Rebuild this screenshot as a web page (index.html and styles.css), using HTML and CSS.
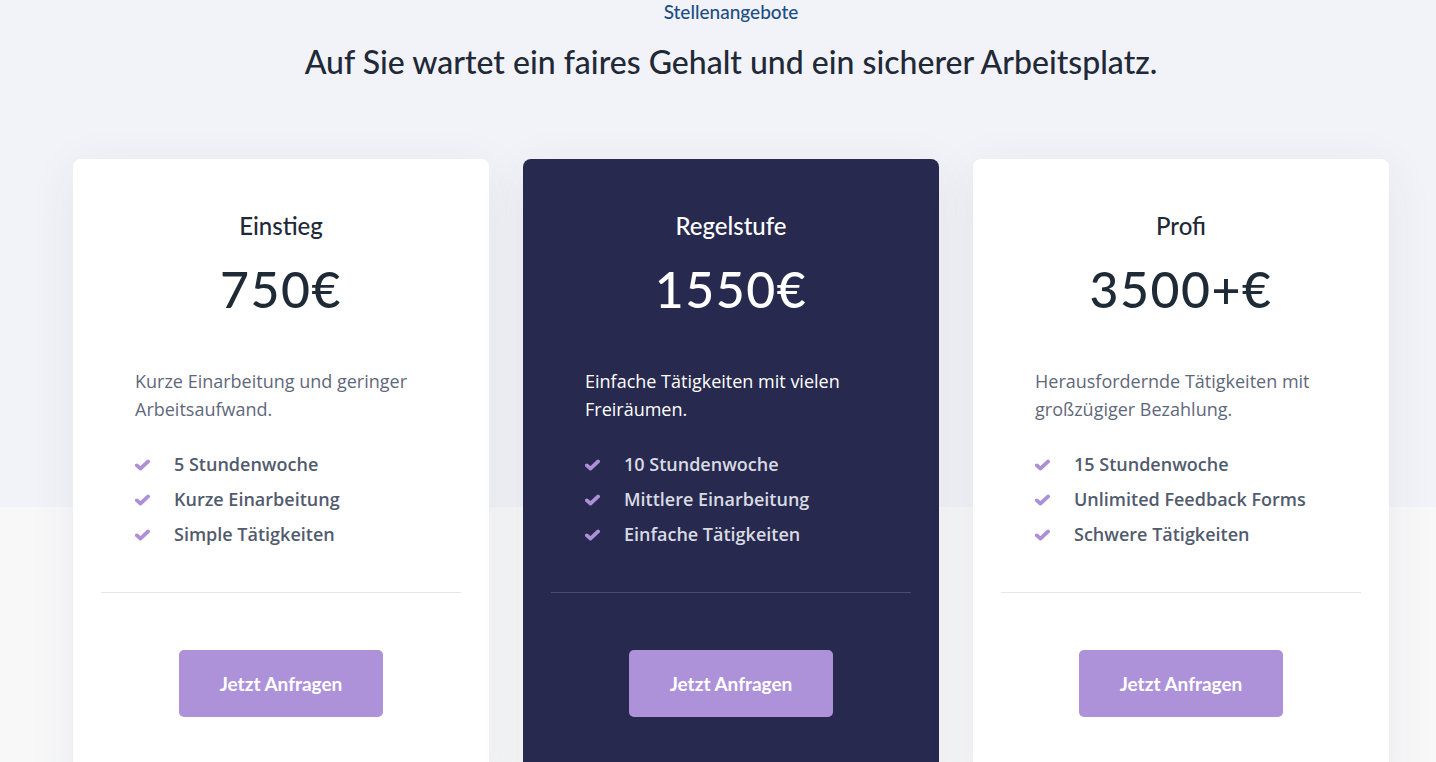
FILE: index.html
```html
<!DOCTYPE html>
<html lang="de">
<head>
<meta charset="utf-8">
<title>Stellenangebote</title>
<link rel="stylesheet" href="styles.css">
</head>
<body>
<section class="pricing">
  <p class="eyebrow">Stellenangebote</p>
  <h1 class="headline">Auf Sie wartet ein faires Gehalt und ein sicherer Arbeitsplatz.</h1>
  <div class="cards">
    <article class="card">
      <h2 class="card-title">Einstieg</h2>
      <div class="price">750€</div>
      <p class="desc">Kurze Einarbeitung und geringer Arbeitsaufwand.</p>
      <ul class="features">
        <li><svg class="check" viewBox="0 0 16 12"><path d="M2 6.4 L5.8 9.8 L14 2.2" /></svg>5 Stundenwoche</li>
        <li><svg class="check" viewBox="0 0 16 12"><path d="M2 6.4 L5.8 9.8 L14 2.2" /></svg>Kurze Einarbeitung</li>
        <li><svg class="check" viewBox="0 0 16 12"><path d="M2 6.4 L5.8 9.8 L14 2.2" /></svg>Simple Tätigkeiten</li>
      </ul>
      <hr class="divider">
      <a class="btn" href="#">Jetzt Anfragen</a>
    </article>
    <article class="card card-dark">
      <h2 class="card-title">Regelstufe</h2>
      <div class="price">1550€</div>
      <p class="desc">Einfache Tätigkeiten mit vielen Freiräumen.</p>
      <ul class="features">
        <li><svg class="check" viewBox="0 0 16 12"><path d="M2 6.4 L5.8 9.8 L14 2.2" /></svg>10 Stundenwoche</li>
        <li><svg class="check" viewBox="0 0 16 12"><path d="M2 6.4 L5.8 9.8 L14 2.2" /></svg>Mittlere Einarbeitung</li>
        <li><svg class="check" viewBox="0 0 16 12"><path d="M2 6.4 L5.8 9.8 L14 2.2" /></svg>Einfache Tätigkeiten</li>
      </ul>
      <hr class="divider">
      <a class="btn" href="#">Jetzt Anfragen</a>
    </article>
    <article class="card">
      <h2 class="card-title">Profi</h2>
      <div class="price">3500+€</div>
      <p class="desc">Herausfordernde Tätigkeiten mit großzügiger Bezahlung.</p>
      <ul class="features">
        <li><svg class="check" viewBox="0 0 16 12"><path d="M2 6.4 L5.8 9.8 L14 2.2" /></svg>15 Stundenwoche</li>
        <li><svg class="check" viewBox="0 0 16 12"><path d="M2 6.4 L5.8 9.8 L14 2.2" /></svg>Unlimited Feedback Forms</li>
        <li><svg class="check" viewBox="0 0 16 12"><path d="M2 6.4 L5.8 9.8 L14 2.2" /></svg>Schwere Tätigkeiten</li>
      </ul>
      <hr class="divider">
      <a class="btn" href="#">Jetzt Anfragen</a>
    </article>
  </div>
</section>
</body>
</html>
```

FILE: styles.css
```css
* { box-sizing: border-box; }

html, body {
  margin: 0;
  padding: 0;
  height: 100%;
  overflow: hidden;
}

body {
  font-family: "Open Sans", "Noto Sans", sans-serif;
  background: #f8f8f9;
}

.pricing {
  background: linear-gradient(to bottom, #f2f3f8 0, #f2f3f8 507px, #f8f8f9 507px, #f8f8f9 100%);
  min-height: 762px;
  padding-left: 26px;
  display: flex;
  flex-direction: column;
  align-items: center;
}

.eyebrow {
  margin: 0;
  padding-top: 1px;
  font-family: "Lato", "Noto Sans", sans-serif;
  font-size: 19px;
  line-height: 22px;
  color: #1d4f86;
  font-weight: 500;
}

.headline {
  margin: 19px 0 0;
  font-family: "Lato", "Noto Sans", sans-serif;
  font-weight: 500;
  font-size: 32px;
  line-height: 40px;
  color: #1f2937;
}

.cards {
  margin-top: 77px;
  display: flex;
  gap: 34px;
}

.card {
  width: 416px;
  height: 640px;
  background: #ffffff;
  border-radius: 8px;
  box-shadow: 0 10px 50px rgba(40, 50, 90, 0.07);
  padding: 52px 28px 0;
  display: flex;
  flex-direction: column;
  align-items: center;
}

.card-dark {
  background: #272a4e;
}

.card-title {
  margin: 0;
  font-family: "Lato", "Noto Sans", sans-serif;
  font-weight: 500;
  font-size: 24px;
  line-height: 30px;
  color: #1f2937;
}

.price {
  margin-top: 20px;
  font-family: "Lato", "Noto Sans", sans-serif;
  font-weight: 500;
  font-size: 50px;
  line-height: 56px;
  color: #1e2a36;
  letter-spacing: 1.5px;
}

.desc {
  align-self: stretch;
  margin: 50px 0 0;
  padding: 0 34px;
  font-size: 18px;
  line-height: 28px;
  color: #5f687b;
}

.features {
  align-self: stretch;
  list-style: none;
  margin: 23px 0 0;
  padding: 0 34px;
}

.features li {
  display: flex;
  align-items: center;
  height: 35px;
  font-size: 18px;
  font-weight: 600;
  color: #525b6e;
}

.check {
  width: 15px;
  height: 12px;
  margin-right: 24px;
  margin-top: 3px;
  flex: none;
}

.check path {
  fill: none;
  stroke: #ad8fd8;
  stroke-width: 4;
  stroke-linecap: round;
  stroke-linejoin: round;
}

.divider {
  align-self: stretch;
  margin: 41px 0 0;
  border: 0;
  border-top: 1px solid #e5e6e8;
}

.card-dark .divider {
  border-top-color: #4a4d6c;
}

.btn {
  margin-top: 57px;
  width: 204px;
  height: 67px;
  border-radius: 5px;
  background: #ad92d9;
  color: #ffffff;
  text-decoration: none;
  font-family: "Lato", "Noto Sans", sans-serif;
  font-weight: 700;
  font-size: 19px;
  display: flex;
  align-items: center;
  justify-content: center;
}

.card-dark .card-title,
.card-dark .price {
  color: #ffffff;
}

.card-dark .desc {
  color: #ffffff;
}

.card-dark .features li {
  color: #d9dae3;
}
```
